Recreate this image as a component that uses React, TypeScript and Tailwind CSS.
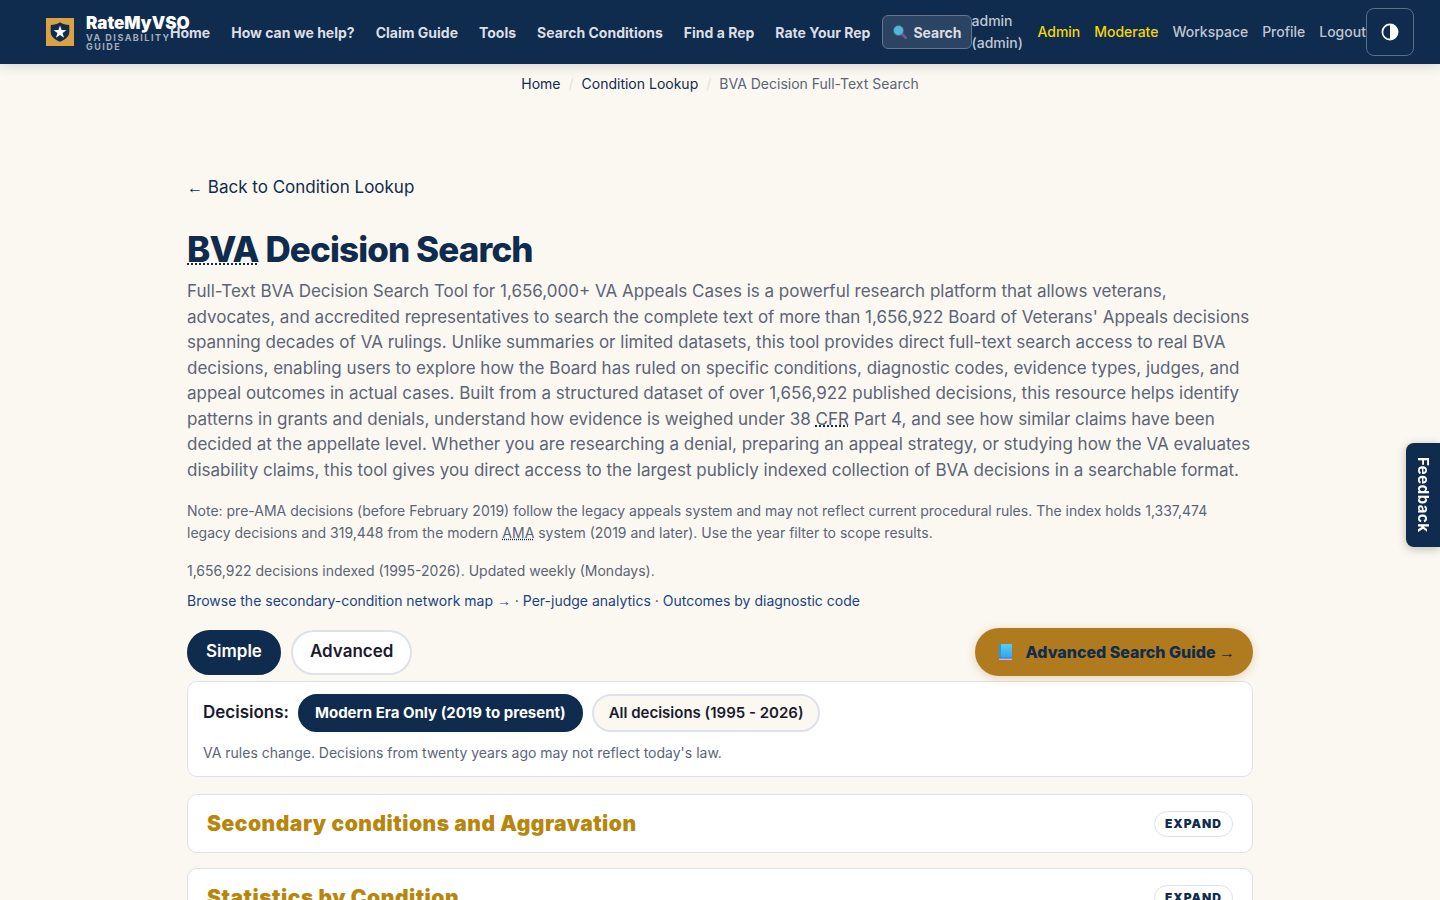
import type { ReactNode } from "react";

const NAV_LINKS = [
  { label: "Home", href: "#home" },
  { label: "How can we help?", href: "#help" },
  { label: "Claim Guide", href: "#claim-guide" },
  { label: "Tools", href: "#tools" },
  { label: "Search Conditions", href: "#conditions" },
  { label: "Find a Rep", href: "#find-a-rep" },
  { label: "Rate Your Rep", href: "#rate" },
];

const SECTIONS = ["Secondary conditions and Aggravation", "Statistics by Condition"];

function Logo() {
  return (
    <svg viewBox="0 0 28 28" className="size-7 shrink-0" aria-hidden="true">
      <rect width="28" height="28" fill="#d9a345" />
      <path
        d="M14 4.2c2.6 1.8 5.8 2.6 9.3 2.7v7.2c0 4.6-4.2 7.7-9.3 9.7-5.1-2-9.3-5.1-9.3-9.7V6.9c3.5-.1 6.7-.9 9.3-2.7z"
        fill="#0f2b4d"
      />
      <path
        d="M14 7.6l1.6 4.5 4.8.1-3.8 2.9 1.4 4.6-4-2.7-4 2.7 1.4-4.6-3.8-2.9 4.8-.1z"
        fill="#fff"
      />
    </svg>
  );
}

function MagnifierIcon() {
  return (
    <svg viewBox="0 0 16 16" className="size-4 shrink-0" aria-hidden="true">
      <path d="M10 10l3.8 3.8" stroke="#84508f" strokeWidth="2.6" strokeLinecap="round" />
      <circle cx="6.5" cy="6.5" r="4.8" fill="#55b4d8" stroke="#4a86a8" strokeWidth=".6" />
    </svg>
  );
}

function BookIcon() {
  return (
    <svg viewBox="0 0 18 18" className="size-[18px] shrink-0" aria-hidden="true">
      <defs>
        <linearGradient id="cover" x1="0" y1="0" x2="0" y2="1">
          <stop offset="0" stopColor="#55cdf5" />
          <stop offset="1" stopColor="#35a5ee" />
        </linearGradient>
      </defs>
      <path d="M2 1h13v14H2z" fill="url(#cover)" />
      <path d="M2 1h2v14H2z" fill="#2f98d4" />
      <path d="M2 15h13v2H2z" fill="#c9b3e6" />
      <path d="M2 14.5h13v1H2z" fill="#3a6fd0" />
    </svg>
  );
}

function ContrastIcon() {
  return (
    <svg viewBox="0 0 18 18" className="size-[18px]" aria-hidden="true">
      <circle cx="9" cy="9" r="7.6" fill="none" stroke="#fff" strokeWidth="1.7" />
      <path d="M9 1.4a7.6 7.6 0 0 1 0 15.2z" fill="#fff" />
    </svg>
  );
}

function Header() {
  return (
    <header className="sticky top-0 z-10 flex h-16 items-center bg-[#0f2b4d] pr-[26px] pl-[46px] text-[14px] shadow-[0_2px_12px_rgba(0,0,0,0.15)]">
      <a href="#home" className="flex w-[124px] shrink-0 items-center gap-3">
        <Logo />
        <span className="flex min-w-0 flex-col whitespace-nowrap">
          <span className="text-[17px] leading-5 font-black text-white">RateMyVSO</span>
          <span className="text-[9px] leading-[9px] font-bold tracking-[1.5px] text-[#a3adbb] uppercase">
            VA Disability
            <br />
            Guide
          </span>
        </span>
      </a>
      <nav className="flex shrink-0 items-center font-bold whitespace-nowrap text-[#dbdfe4]">
        <div className="flex items-center gap-[21px] pr-3">
          {NAV_LINKS.map((link) => (
            <a key={link.label} href={link.href}>
              {link.label}
            </a>
          ))}
        </div>
        <a
          href="#search"
          className="flex h-[34px] items-center gap-[5px] rounded-md border border-[#64758c] bg-[#2c4463] px-[9px]"
        >
          <MagnifierIcon />
          Search
        </a>
      </nav>
      <div className="flex grow items-center justify-between leading-[22px] font-medium text-[#bfc7d1]">
        <span className="w-[52px]">admin (admin)</span>
        <a href="#admin" className="text-[#f5d60a]">Admin</a>
        <a href="#moderate" className="text-[#f5d60a]">Moderate</a>
        <a href="#workspace">Workspace</a>
        <a href="#profile">Profile</a>
        <a href="#logout">Logout</a>
      </div>
      <button
        type="button"
        aria-label="Toggle theme"
        className="flex size-12 shrink-0 items-center justify-center rounded-lg border border-[#5c6e86]"
      >
        <ContrastIcon />
      </button>
    </header>
  );
}

function Breadcrumbs() {
  return (
    <nav
      aria-label="Breadcrumb"
      className="flex justify-center gap-2 py-2 text-[14px] leading-6 text-[#0f2b4d]"
    >
      <a href="#home">Home</a>
      <span className="text-[#dde1ea]">/</span>
      <a href="#lookup">Condition Lookup</a>
      <span className="text-[#dde1ea]">/</span>
      <span className="text-[#5c6478]">BVA Decision Full-Text Search</span>
    </nav>
  );
}

function Abbr({ title, thick, children }: { title: string; thick?: boolean; children: ReactNode }) {
  return (
    <abbr
      title={title}
      className={
        thick
          ? "underline decoration-[#0f2b4d] decoration-dotted decoration-2"
          : "underline decoration-[#0f2b4d] decoration-dotted"
      }
    >
      {children}
    </abbr>
  );
}

function SectionCard({ title }: { title: string }) {
  return (
    <section className="flex h-[59px] items-center justify-between rounded-[10px] border border-[#dde1ea] bg-white px-[19px]">
      <h2 className="text-[21px] font-black tracking-wide text-[#b8860b]">{title}</h2>
      <button
        type="button"
        className="h-[26px] rounded-full border border-[#dde1ea] px-[10px] text-[12px] font-black tracking-[1px] text-[#0f2b4d]"
      >
        EXPAND
      </button>
    </section>
  );
}

export default function App() {
  return (
    <div className="min-h-screen bg-[#fbf8f1] font-['Inter',sans-serif] text-[#1a1a2e]">
      <Header />
      <Breadcrumbs />

      <main className="mx-auto max-w-[1098px] px-4 pt-[70px] pb-12">
        <a href="#lookup" className="block text-[17px] leading-[26px] text-[#0f2b4d]">
          <span className="font-['Liberation_Sans',sans-serif] text-[16px] leading-none">←</span> Back
          to Condition Lookup
        </a>

        <h1 className="mt-[27px] text-[35px] leading-[44px] font-extrabold tracking-tight text-[#0f2b4d]">
          <Abbr title="Board of Veterans' Appeals" thick>BVA</Abbr> Decision Search
        </h1>
        <p className="mt-2 text-[17px] leading-normal text-[#5c6478]">
          Full-Text BVA Decision Search Tool for 1,656,000+ VA Appeals Cases is a powerful research
          platform that allows veterans, advocates, and accredited representatives to search the
          complete text of more than 1,656,922 Board of Veterans' Appeals decisions spanning decades
          of VA rulings. Unlike summaries or limited datasets, this tool provides direct full-text
          search access to real BVA decisions, enabling users to explore how the Board has ruled on
          specific conditions, diagnostic codes, evidence types, judges, and appeal outcomes in
          actual cases. Built from a structured dataset of over 1,656,922 published decisions, this
          resource helps identify patterns in grants and denials, understand how evidence is weighed
          under 38 <Abbr title="Code of Federal Regulations" thick>CFR</Abbr> Part 4, and see how
          similar claims have been decided at the appellate level. Whether you are researching a
          denial, preparing an appeal strategy, or studying how the VA evaluates disability claims,
          this tool gives you direct access to the largest publicly indexed collection of BVA
          decisions in a searchable format.
        </p>

        <p className="mt-[17px] text-[14px] leading-[22px] text-[#5c6478]">
          Note: pre-AMA decisions (before February 2019) follow the legacy appeals system and may not
          reflect current procedural rules. The index holds 1,337,474 legacy decisions and 319,448
          from the modern <Abbr title="Appeals Modernization Act">AMA</Abbr> system (2019 and later).
          Use the year filter to scope results.
        </p>
        <p className="mt-4 text-[14px] leading-[22px] text-[#5c6478]">
          1,656,922 decisions indexed (1995-2026). Updated weekly (Mondays).
        </p>
        <p className="mt-2 text-[14px] leading-[22px] text-[#1a4480]">
          <a href="#network">
            Browse the secondary-condition network map{" "}
            <span className="font-['Liberation_Sans',sans-serif] leading-none">→</span>
          </a>{" "}
          · <a href="#judges">Per-judge analytics</a> ·{" "}
          <a href="#outcomes">Outcomes by diagnostic code</a>
        </p>

        <div className="mt-4 flex items-center justify-between">
          <div className="flex gap-[10px] text-[17px] font-semibold">
            <button
              type="button"
              className="h-[45px] rounded-full border-2 border-[#0f2b4d] bg-[#0f2b4d] px-[17px] text-white"
            >
              Simple
            </button>
            <button
              type="button"
              className="h-[45px] rounded-full border-2 border-[#dde1ea] bg-white px-[17px]"
            >
              Advanced
            </button>
          </div>
          <a
            href="#guide"
            className="flex h-12 items-center gap-[10px] rounded-full bg-[#b07b1e] pr-[18px] pl-[22px] text-[16px] font-extrabold text-[#0f2b4d] shadow-[0_2px_10px_rgba(176,123,30,0.3)]"
          >
            <BookIcon />
            <span>
              Advanced Search Guide{" "}
              <span className="font-['Liberation_Sans',sans-serif] leading-none font-normal">→</span>
            </span>
          </a>
        </div>

        <div className="mt-[5px] rounded-[10px] border border-[#dde1ea] bg-white px-[15px] py-3">
          <div className="flex items-center gap-[9px] text-[15px] font-semibold">
            <span className="text-[17px]">Decisions:</span>
            <button
              type="button"
              className="h-[38px] rounded-full border-2 border-[#0f2b4d] bg-[#0f2b4d] px-[15px] font-bold text-white"
            >
              Modern Era Only (2019 to present)
            </button>
            <button
              type="button"
              className="h-[38px] rounded-full border-2 border-[#dde1ea] bg-[#fbf8f1] px-[15px]"
            >
              All decisions (1995 - 2026)
            </button>
          </div>
          <p className="mt-[10px] text-[14px] leading-[22px] text-[#5c6478]">
            VA rules change. Decisions from twenty years ago may not reflect today's law.
          </p>
        </div>

        <div className="mt-[17px] flex flex-col gap-[15px]">
          {SECTIONS.map((title) => (
            <SectionCard key={title} title={title} />
          ))}
        </div>
      </main>

      <button
        type="button"
        className="fixed top-[55%] right-0 z-20 flex h-[104px] w-[34px] -translate-y-1/2 items-center justify-center rounded-l-lg bg-[#0f2b4d] text-[15px] font-bold tracking-[0.5px] text-white shadow-[0_2px_10px_rgba(0,0,0,0.25)] [writing-mode:vertical-rl]"
      >
        Feedback
      </button>
    </div>
  );
}
